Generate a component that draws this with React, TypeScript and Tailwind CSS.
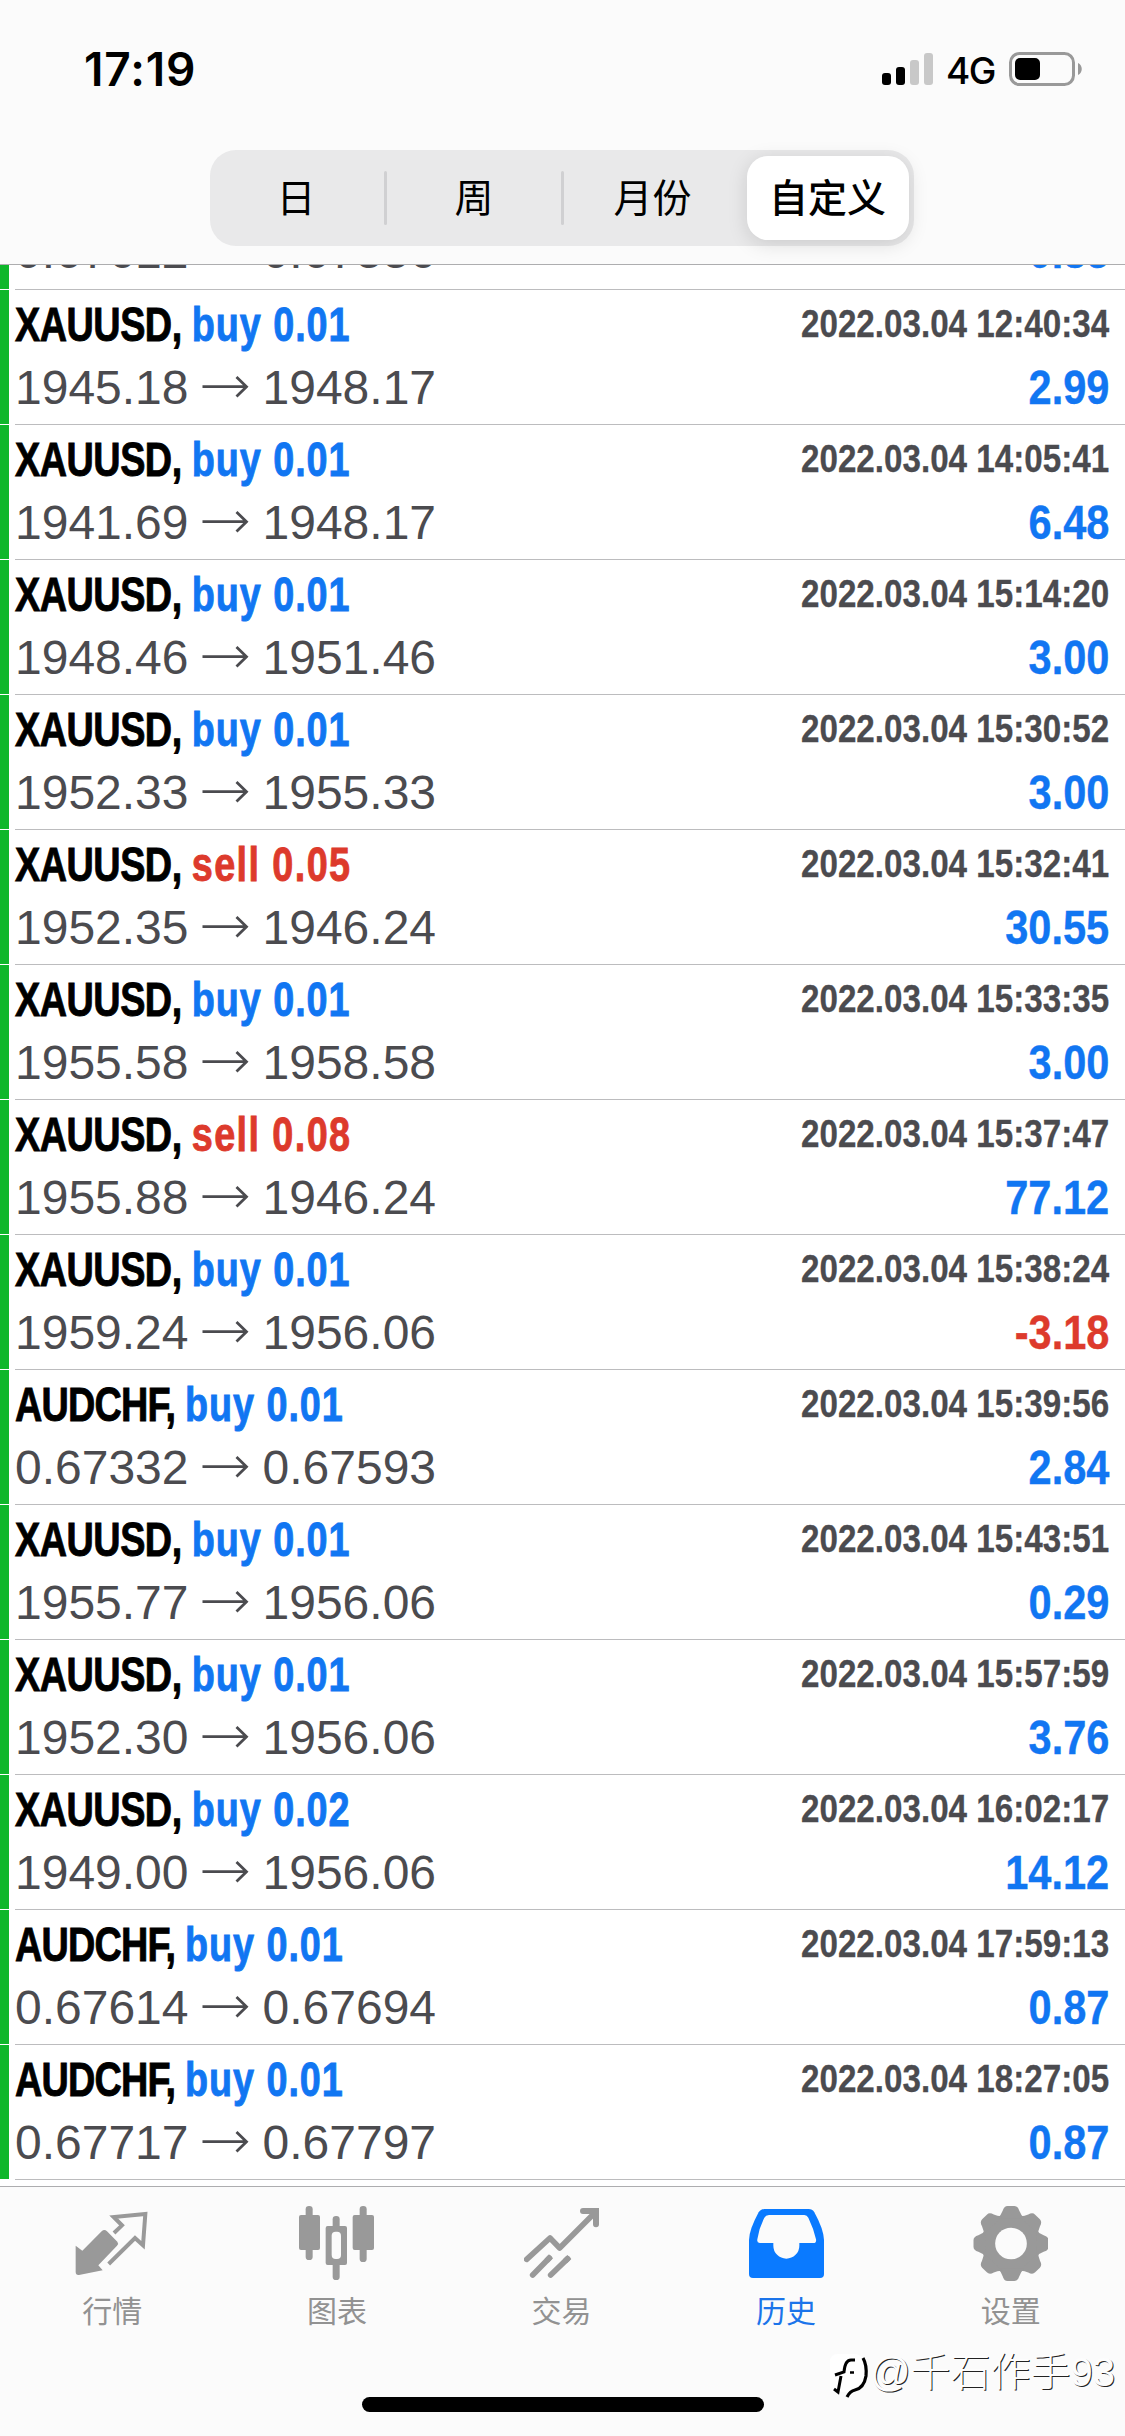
import React from "react";

type Deal = { s: string; side: "buy" | "sell"; v: string; a: string; b: string; t: string; p: string };

const deals: Deal[] = [
  { s: "XAUUSD", side: "buy", v: "0.01", a: "1945.18", b: "1948.17", t: "2022.03.04 12:40:34", p: "2.99" },
  { s: "XAUUSD", side: "buy", v: "0.01", a: "1941.69", b: "1948.17", t: "2022.03.04 14:05:41", p: "6.48" },
  { s: "XAUUSD", side: "buy", v: "0.01", a: "1948.46", b: "1951.46", t: "2022.03.04 15:14:20", p: "3.00" },
  { s: "XAUUSD", side: "buy", v: "0.01", a: "1952.33", b: "1955.33", t: "2022.03.04 15:30:52", p: "3.00" },
  { s: "XAUUSD", side: "sell", v: "0.05", a: "1952.35", b: "1946.24", t: "2022.03.04 15:32:41", p: "30.55" },
  { s: "XAUUSD", side: "buy", v: "0.01", a: "1955.58", b: "1958.58", t: "2022.03.04 15:33:35", p: "3.00" },
  { s: "XAUUSD", side: "sell", v: "0.08", a: "1955.88", b: "1946.24", t: "2022.03.04 15:37:47", p: "77.12" },
  { s: "XAUUSD", side: "buy", v: "0.01", a: "1959.24", b: "1956.06", t: "2022.03.04 15:38:24", p: "-3.18" },
  { s: "AUDCHF", side: "buy", v: "0.01", a: "0.67332", b: "0.67593", t: "2022.03.04 15:39:56", p: "2.84" },
  { s: "XAUUSD", side: "buy", v: "0.01", a: "1955.77", b: "1956.06", t: "2022.03.04 15:43:51", p: "0.29" },
  { s: "XAUUSD", side: "buy", v: "0.01", a: "1952.30", b: "1956.06", t: "2022.03.04 15:57:59", p: "3.76" },
  { s: "XAUUSD", side: "buy", v: "0.02", a: "1949.00", b: "1956.06", t: "2022.03.04 16:02:17", p: "14.12" },
  { s: "AUDCHF", side: "buy", v: "0.01", a: "0.67614", b: "0.67694", t: "2022.03.04 17:59:13", p: "0.87" },
  { s: "AUDCHF", side: "buy", v: "0.01", a: "0.67717", b: "0.67797", t: "2022.03.04 18:27:05", p: "0.87" },
];

function Arrow() {
  return (
    <svg className="mx-[13px] h-12 w-12" viewBox="0 0 48 48" fill="none" stroke="#4b4b4f" strokeWidth="2.8">
      <path d="M0.5 22.700H45M34.500 13L44.500 22.700L34.500 32.400" />
    </svg>
  );
}

function Prices({ a, b }: { a: string; b: string }) {
  return (
    <div className="flex text-[48px] leading-[48px] text-[#4b4b4f]">
      <span>{a}</span>
      <Arrow />
      <span>{b}</span>
    </div>
  );
}

function Profit({ p }: { p: string }) {
  return (
    <span
      className={
        "origin-right scale-x-[0.865] text-[48px] leading-[48px] font-bold [-webkit-text-stroke:0.4px] " +
        (p.startsWith("-") ? "text-[#dd3a2c]" : "text-[#1176f2]")
      }
    >
      {p}
    </span>
  );
}

function Row({ d }: { d: Deal }) {
  return (
    <div className="flex h-[135px]">
      <div className="mb-px w-[9px] bg-[#0fb72b]" />
      <div className="ml-[6px] flex-1 border-b border-[#bcbcbe] pr-4">
        <div className="flex h-[61px] items-start justify-between pt-[11px] font-bold">
          <span className="origin-left scale-x-[0.787] text-[48px] leading-[48px] whitespace-pre text-black [-webkit-text-stroke:0.9px]">
            <span className={d.s === "AUDCHF" ? "tracking-[-1px]" : "tracking-[-0.6px]"}>{d.s}, </span>
            <span className={d.side === "buy" ? "tracking-[1.2px] text-[#1176f2]" : "tracking-[1.8px] text-[#dd3a2c]"}>
              {d.side} {d.v}
            </span>
          </span>
          <span className="mt-[3px] origin-right scale-x-[0.851] text-[39px] leading-[39px] text-[#4b4b4f] [-webkit-text-stroke:0.3px]">
            {d.t}
          </span>
        </div>
        <div className="mt-[13px] flex justify-between">
          <Prices a={d.a} b={d.b} />
          <Profit p={d.p} />
        </div>
      </div>
    </div>
  );
}

function StatusBar() {
  return (
    <div className="flex h-[150px] items-start justify-between pr-[42px] pl-[84px]">
      <span className="mt-[42px] font-[Inter] text-[46px] leading-[54px] font-semibold tracking-[0.9px]">17:19</span>
      <div className="mt-[52px] flex items-start">
        <svg className="mt-px h-8 w-[51px]" viewBox="0 0 51 32">
          <rect x="0" y="20" width="9" height="12" rx="3" />
          <rect x="14" y="14" width="9" height="18" rx="3" />
          <rect x="28" y="7" width="9" height="25" rx="3" fill="#c8c8c8" />
          <rect x="42" y="0" width="9" height="32" rx="3" fill="#c8c8c8" />
        </svg>
        <span className="ml-[13px] w-[63px] font-[Inter] text-[37px] leading-[38px] font-medium tracking-[-1.5px]">4G</span>
        <svg className="h-[34px] w-[74px]" viewBox="0 0 74 34">
          <rect x="1.5" y="1.5" width="63" height="31" rx="9" fill="none" stroke="#999" strokeWidth="3" />
          <rect x="6" y="6" width="25" height="22" rx="5" />
          <path d="M69 11C74 13 74 21 69 23Z" fill="#999" />
        </svg>
      </div>
    </div>
  );
}

function Segments() {
  return (
    <div className="ml-[210px] flex h-24 w-[704px] items-center rounded-[26px] bg-[#e9e9ea] text-[39px]">
      <div className="w-[174px] pt-[3px] pr-[2px] text-center">日</div>
      <div className="h-[54px] w-[3px] rounded bg-[#d0d0d2]" />
      <div className="w-[174px] pt-[3px] text-center">周</div>
      <div className="h-[54px] w-[3px] rounded bg-[#d0d0d2]" />
      <div className="flex-1 pt-[3px] pr-[6px] text-center">月份</div>
      <div className="mr-[5px] flex h-[84px] w-[162px] items-center justify-center rounded-[21px] bg-white pt-[3px] pr-px font-medium shadow-[0_4px_20px_rgba(0,0,0,0.13)]">
        自定义
      </div>
    </div>
  );
}

const QuotesIcon = (
  <svg className="size-[75px]" viewBox="224 198 225 225">
    <path
      d="M226 317L246 332L304 274Q312 266 320 274L351 305Q356 311 350 317L294 376L307 391L236 405Q226 406 226 396Z"
      fill="#999"
    />
    <path d="M341 279L365 256L340 231L435 222L428 316L404 294L325 372" fill="none" stroke="#999" strokeWidth="12" />
  </svg>
);

const ChartIcon = (
  <svg className="size-[75px]" viewBox="898 198 225 225" fill="#999">
    <rect x="918" y="198" width="21" height="162" rx="10" />
    <rect x="898" y="225" width="63" height="105" rx="6" />
    <rect x="999" y="228" width="21" height="192" rx="10" />
    <rect x="978" y="258" width="64" height="117" rx="6" />
    <rect x="996" y="275" width="28" height="82" rx="12" fill="#fbfbfb" />
    <rect x="1080" y="198" width="21" height="168" rx="10" />
    <rect x="1059" y="225" width="64" height="105" rx="6" />
  </svg>
);

const TradeIcon = (
  <svg className="size-[75px]" viewBox="372 198 225 225" fill="none" stroke="#999" strokeWidth="17" strokeLinecap="round">
    <path d="M380 358L450 294L479 324L586 217" strokeLinejoin="round" />
    <path d="M549 213H588V253" strokeWidth="18" />
    <path d="M398 405L448 354" />
    <path d="M452 405L503 356" />
    <path d="M440 362L453 349M495 364L508 351" strokeLinecap="butt" />
  </svg>
);

const HistoryIcon = (
  <svg className="size-[75px]" viewBox="72 198 225 225">
    <path
      d="M118 207H251Q262 207 268 217Q296 268 297 300V402Q297 414 285 414H84Q72 414 72 402V300Q73 268 101 217Q107 207 118 207Z"
      fill="#0a7aff"
    />
    <path
      d="M132 225H238Q246 225 250 233Q266 266 273 298Q275 309 265 309H223V317A38 38 0 0 1 145 317V309H104Q95 309 97 298Q102 265 118 233Q122 225 132 225Z"
      fill="#fbfbfb"
    />
  </svg>
);

const GearIcon = (
  <svg className="size-[75px]" viewBox="-114 -112.5 225 225" fill="#999">
    <circle r="88" />
    <g>
      {[0, 45, 90, 135, 180, 225, 270, 315].map((r) => (
        <path
          key={r}
          transform={`rotate(${r})`}
          d="M-40 -76Q-30 -84 -25 -98Q-21 -112.500 -10 -112.500H10Q21 -112.500 25 -98Q30 -84 40 -76Z"
        />
      ))}
    </g>
    <circle r="47.500" fill="#fbfbfb" />
  </svg>
);

const tabs = [
  { label: "行情", icon: QuotesIcon },
  { label: "图表", icon: ChartIcon },
  { label: "交易", icon: TradeIcon },
  { label: "历史", icon: HistoryIcon, active: true },
  { label: "设置", icon: GearIcon },
];

export default function App() {
  return (
    <div className="relative flex h-[2436px] w-[1125px] flex-col overflow-hidden bg-white font-['Liberation_Sans','Noto_Sans_CJK_SC',sans-serif] text-black">
      <header className="h-[265px] shrink-0 border-b border-[#adadaf] bg-[#fbfbfb]">
        <StatusBar />
        <Segments />
      </header>

      <main className="h-[1921px] shrink-0">
        <div className="flex h-[25px] overflow-hidden">
          <div className="mb-px w-[9px] bg-[#0fb72b]" />
          <div className="ml-[6px] flex flex-1 items-end justify-between border-b border-[#bcbcbe] pr-4 pb-[13px]">
            <Prices a="0.67612" b="0.67556" />
            <Profit p="0.85" />
          </div>
        </div>
        {deals.map((d) => (
          <Row key={d.t} d={d} />
        ))}
      </main>

      <nav className="h-[250px] border-t border-[#adadaf] bg-[#fbfbfb]">
        <div className="flex pt-[19px] pr-[2px]">
          {tabs.map((t) => (
            <div
              key={t.label}
              className={"flex flex-1 flex-col items-center " + (t.active ? "text-[#1b74ea]" : "text-[#929292]")}
            >
              {t.icon}
              <span className="mt-[11px] text-[30px] leading-[40px]">{t.label}</span>
            </div>
          ))}
        </div>
      </nav>
      <div className="absolute top-[2397px] left-[362px] h-[15px] w-[402px] rounded-full bg-black" />
      <div className="absolute top-[2348px] left-[830px] flex items-start">
        <svg className="h-[54px] w-[40px]" viewBox="0 0 40 54" fill="none" stroke="#000" strokeWidth="2.6">
          <path
            d="M0 14Q0 6 8 6H26Q37 9 37 24Q37 38 27 43L17 50V44H4Q0 44 0 40Z"
            fill="#fff"
            stroke="none"
          />
          <path d="M25 12H21Q15 12 14 24L5 27M11 28L8 44L4 41" strokeWidth="3" />
          <path d="M20 24.500H24" strokeWidth="2.5" />
          <path d="M33 10Q37 17 36 28Q34 40 25 42Q20 43 17 49" strokeWidth="3.200" />
        </svg>
        <span className="text-[40px] leading-[48px] font-light text-[#fdfdfd] [text-shadow:1px_1px_0_#222]">
          @千石作手93
        </span>
      </div>
    </div>
  );
}
